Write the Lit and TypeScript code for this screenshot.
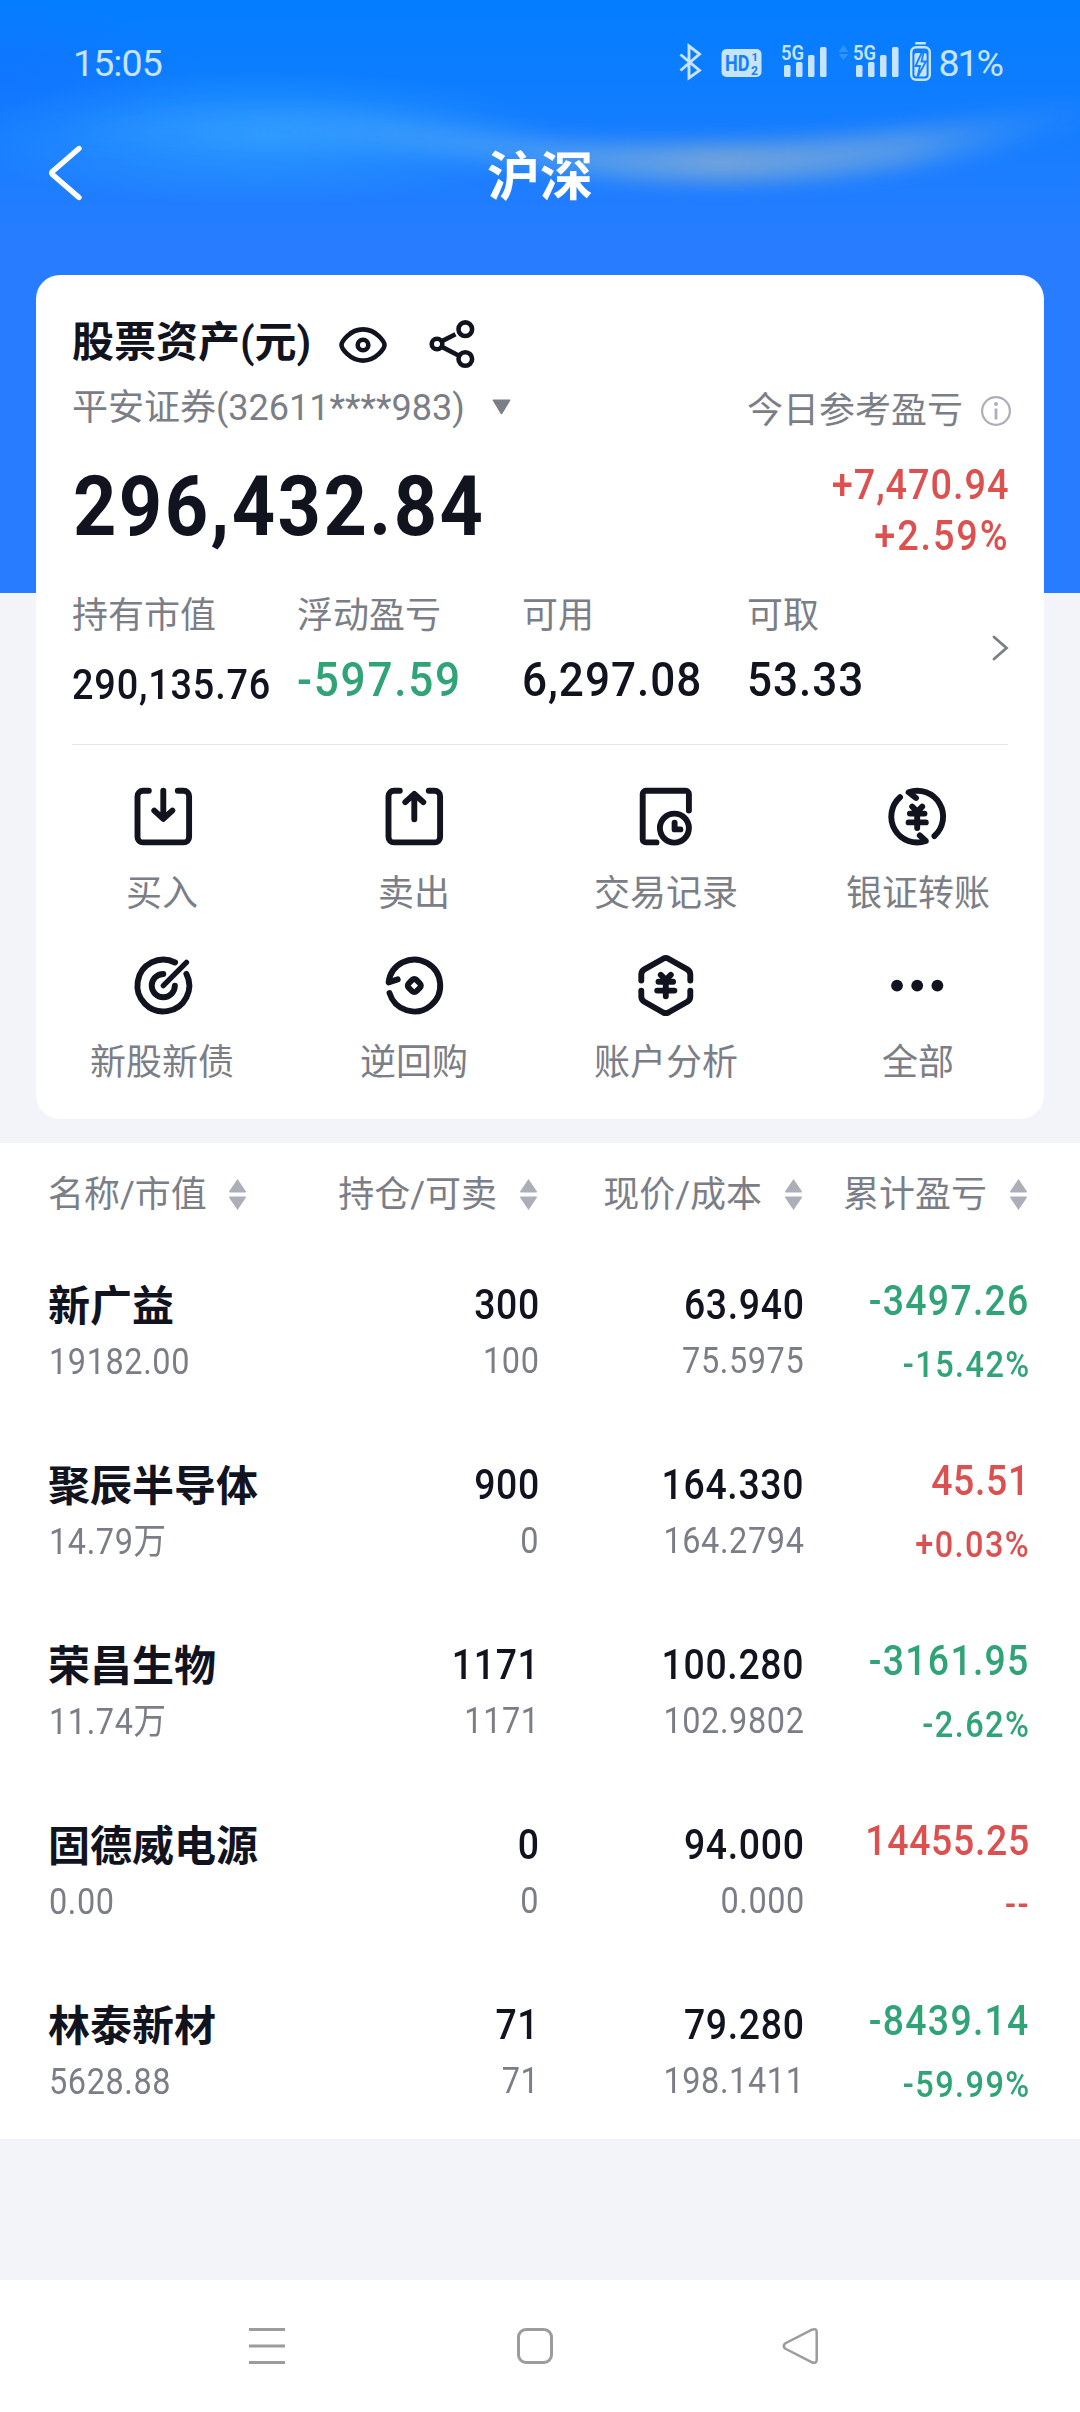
import { LitElement, html, svg, css } from "lit";
import { customElement } from "lit/decorators.js";

type Tone = "up" | "down";
interface Holding {
  name: string;
  value: string;
  qty: string;
  sellable: string;
  price: string;
  cost: string;
  profit: string;
  rate: string;
  tone: Tone;
}

const HOLDINGS: Holding[] = [
  { name: "新广益", value: "19182.00", qty: "300", sellable: "100", price: "63.940", cost: "75.5975", profit: "-3497.26", rate: "-15.42%", tone: "down" },
  { name: "聚辰半导体", value: "14.79万", qty: "900", sellable: "0", price: "164.330", cost: "164.2794", profit: "45.51", rate: "+0.03%", tone: "up" },
  { name: "荣昌生物", value: "11.74万", qty: "1171", sellable: "1171", price: "100.280", cost: "102.9802", profit: "-3161.95", rate: "-2.62%", tone: "down" },
  { name: "固德威电源", value: "0.00", qty: "0", sellable: "0", price: "94.000", cost: "0.000", profit: "14455.25", rate: "--", tone: "up" },
  { name: "林泰新材", value: "5628.88", qty: "71", sellable: "71", price: "79.280", cost: "198.1411", profit: "-8439.14", rate: "-59.99%", tone: "down" },
];

const yuan = (dy: number) => svg`
  <path transform="translate(0 ${dy})" d="M-5-10 0-5 5-10M0-5V11.5M-7.3-3H7.3M-8.6 5.8H8.6"/>`;

const ACTIONS = [
  { label: "买入", dx: 1.3, icon: svg`<path d="M-14.5-25.8H-20.3a5.5 5.5 0 0 0-5.5 5.5V20.3a5.5 5.5 0 0 0 5.5 5.5H20.3a5.5 5.5 0 0 0 5.5-5.5V-20.3a5.5 5.5 0 0 0-5.5-5.5H14.5M0-26V2M-9-6 0 2.3 9-6"/>` },
  { label: "卖出", dx: 0.3, icon: svg`<path d="M-14.5-25.8H-20.3a5.5 5.5 0 0 0-5.5 5.5V20.3a5.5 5.5 0 0 0 5.5 5.5H20.3a5.5 5.5 0 0 0 5.5-5.5V-20.3a5.5 5.5 0 0 0-5.5-5.5H14.5M0-22V2.6M-9-14.4 0-22.7 9-14.4"/>` },
  { label: "交易记录", dx: -0.2, icon: svg`<path d="M23.1-6V-22.6a3.2 3.2 0 0 0-3.2-3.2H-19.9a3.2 3.2 0 0 0-3.2 3.2V22.6a3.2 3.2 0 0 0 3.2 3.2H-9.3"/><circle cx="8.6" cy="11.5" r="14.5"/><path d="M8.8 6V12.8H14.6"/>` },
  { label: "银证转账", dx: -0.8, icon: svg`<path d="M-1.2-18.6-8.6-24.4A25.9 25.9 0 0 1 17.2 19.4M-17.2-19.4A25.9 25.9 0 0 0 8.6 24.4L2.6 18.8"/>${yuan(0)}` },
  { label: "新股新债", dx: 1.3, icon: svg`<path d="M11.8-23.1A25.9 25.9 0 1 0 23.1-11.8M0-11.6A11.6 11.6 0 1 0 11.6 0"/><path stroke-width="5.3" d="M0 0 23.2-23.2"/>` },
  { label: "逆回购", dx: 0.3, icon: svg`<path d="M-16.6-6.2-25.7-3.2A25.9 25.9 0 1 1-24.8 7.4"/><rect x="-5.5" y="-5.5" width="11" height="11" rx="3" transform="rotate(45)"/>` },
  { label: "账户分析", dx: -0.2, icon: svg`<path d="M-24.5-5V-11Q-24.5-14.4-21.5-16.2L-2.6-26.9Q0-28.2 2.6-26.9L21.5-16.2Q24.5-14.4 24.5-11V-5M-24.5 5V11Q-24.5 14.4-21.5 16.2L-2.6 26.9Q0 28.2 2.6 26.9L21.5 16.2Q24.5 14.4 24.5 11V5"/>${yuan(-0.8)}` },
  { label: "全部", dx: -0.8, icon: svg`<g fill="#11141f" stroke="none"><circle cx="-20.2" r="5.9"/><circle r="5.9"/><circle cx="20.2" r="5.9"/></g>` },
];

@customElement("status-bar")
class StatusBar extends LitElement {
  static styles = css`
    :host {
      display: flex;
      justify-content: space-between;
      height: 84px;
      padding: 35px 78px 0 73px;
      box-sizing: border-box;
      font-family: Roboto, sans-serif;
      color: #c6e3ff;
    }
    .time { font-size: 37.5px; line-height: 56px; letter-spacing: -0.9px; }
    .right { display: flex; align-items: flex-start; }
    .icons { display: block; margin: -5px 5px 0 0; }
    .battery { font-size: 37.5px; line-height: 56px; letter-spacing: -2px; }
  `;

  private signal(x: number) {
    return svg`
      <text x=${x - 3} y="30" font-size="20.5" font-weight="600" textLength="23" lengthAdjust="spacingAndGlyphs">5G</text>
      <g>
        <rect x=${x} y="35" width="6.5" height="12" rx="1.5"/>
        <rect x=${x + 12} y="32" width="6.5" height="15" rx="1.5"/>
        <rect x=${x + 24} y="25" width="6.5" height="22" rx="1.5"/>
        <rect x=${x + 36} y="17" width="6.5" height="30" rx="1.5"/>
      </g>`;
  }

  render() {
    return html`
      <span class="time">15:05</span>
      <div class="right">
        <svg class="icons" width="260" height="54" viewBox="0 0 260 54" fill="#c6e3ff" font-family="Roboto, sans-serif">
          <path d="M7.500 24.500 26.500 40.500 16 48V16L26.500 24 7.500 40.500" fill="none" stroke="#c6e3ff" stroke-width="2.9"/>
          <rect x="48.500" y="19" width="40" height="28" rx="5"/>
          <g fill="#1580ff" font-weight="700">
            <text x="52" y="41" font-size="22.500" textLength="24.500" lengthAdjust="spacingAndGlyphs">HD</text>
            <text x="78.500" y="31" font-size="11.500">1</text>
            <text x="78" y="45" font-size="12">2</text>
          </g>
          ${this.signal(111)}
          <g opacity=".22"><path d="M165.500 22 170.500 15 175.500 22ZM165.500 24 170.500 30 175.500 24Z"/></g>
          ${this.signal(183)}
          <rect x="242" y="12" width="11" height="2.600" rx="1"/>
          <rect x="238.200" y="17.200" width="18.600" height="32.600" rx="5" fill="none" stroke="#c6e3ff" stroke-width="2.400"/>
          <rect x="241.400" y="23" width="12.200" height="23.500" rx="2"/>
          <path d="M249.500 21 242.500 36H247L244.500 47 253 31.500H248.500L251 21Z" stroke="#1580ff" stroke-width="1.800"/>
        </svg>
        <span class="battery">81%</span>
      </div>`;
  }
}

@customElement("asset-card")
class AssetCard extends LitElement {
  static styles = css`
    :host {
      display: block;
      height: 844px;
      margin: 0 36px;
      box-sizing: border-box;
      background: #fff;
      border-radius: 24px;
      color: #11141f;
    }
    .top { display: flex; justify-content: space-between; height: 305px; padding: 0 33px 0 36px; }
    .left { padding-top: 38px; }
    .title { display: flex; align-items: center; height: 60px; line-height: 60px; font-size: 42px; font-weight: 600; white-space: nowrap; }
    .eye { margin: 3px 0 0 27px; }
    .share { margin: 1px 0 0 39px; }
    .broker { display: flex; align-items: center; height: 48px; margin-top: 11px; line-height: 48px; font-size: 36px; color: #7b7e87; white-space: nowrap; }
    .caret { margin: -2px 0 0 27px; }
    .total { margin-top: 27px; font-size: 84px; line-height: 96px; font-weight: 700; }
    .num { display: inline-block; white-space: nowrap; letter-spacing: 0.018em; transform: scaleX(0.9); transform-origin: left; }
    .total .num { letter-spacing: 0.033em; margin-left: 1px; }
    .right { display: flex; flex-direction: column; align-items: flex-end; padding-top: 112px; }
    .today { display: flex; align-items: center; height: 48px; line-height: 48px; font-size: 36px; color: #7b7e87; }
    .info { margin: -1px 0 0 18px; }
    .gain { margin: 24px 2px 0 0; text-align: right; font-size: 42px; line-height: 51px; font-weight: 500; color: #dd5050; }
    .gain .num { display: block; transform-origin: right; letter-spacing: 0.026em; }
    .gain .num + .num { letter-spacing: 0.05em; }
    .stats { display: grid; grid-template-columns: repeat(3, 225px) 1fr auto; height: 152px; padding-top: 12px; margin: 0 36px; border-bottom: 1px solid #e6e7eb; box-sizing: content-box; }
    .label { line-height: 48px; font-size: 36px; color: #7b7e87; white-space: nowrap; }
    .stat { margin-top: 10px; font-size: 49px; line-height: 60px; font-weight: 500; }
    .stat .num { letter-spacing: 0.022em; }
    .stat.small { margin-top: 15px; font-size: 42px; }
    .stat.down { color: #30a377; }
    .stat.down .num { letter-spacing: 0.04em; }
    .more { margin: 43px -1px 0 0; }
    .actions { display: grid; grid-template-columns: repeat(4, 252px); row-gap: 32px; padding-top: 36px; }
    .action { display: flex; flex-direction: column; align-items: center; gap: 17px; line-height: 48px; font-size: 36px; color: #7b7e87; }
    svg { display: block; flex: none; }
  `;

  render() {
    return html`
      <section class="top">
        <div class="left">
          <div class="title">
            <span>股票资产(元)</span>
            <svg class="eye" width="50" height="40" viewBox="0 0 50 40" fill="none" stroke="#11141f" stroke-width="4.6">
              <path d="M3.5 20C3.5 17 11.500 4.400 25 4.400S46.500 17 46.500 20 38.500 35.600 25 35.600 3.500 23 3.500 20Z"/>
              <circle cx="25" cy="20" r="5.300"/>
            </svg>
            <svg class="share" width="50" height="50" viewBox="0 0 50 50" fill="none" stroke="#11141f" stroke-width="4.600">
              <circle cx="10" cy="25" r="5.300"/><circle cx="38.300" cy="10.200" r="6.800"/><circle cx="38.300" cy="40" r="6.800"/>
              <path d="M14.500 22.400 28.500 15.200M14.500 27.600 32.500 37"/>
            </svg>
          </div>
          <div class="broker">
            <span>平安证券(32611****983)</span>
            <svg class="caret" width="19" height="16" viewBox="0 0 19 16" fill="#7b7e87"><path d="M1.200.5H17.800Q18.800.5 18.300 1.500L10.500 14.600Q9.500 16 8.500 14.600L.7 1.500Q.2.5 1.200.5Z"/></svg>
          </div>
          <div class="total"><span class="num">296,432.84</span></div>
        </div>
        <div class="right">
          <div class="today">
            <span>今日参考盈亏</span>
            <svg class="info" width="30" height="30" viewBox="0 0 30 30" fill="none" stroke="#acafba" stroke-width="2.200">
              <circle cx="15" cy="15" r="13.900"/>
              <path d="M15 12.500V23.500" stroke-width="2.800"/><circle cx="15" cy="8" r="2" fill="#acafba" stroke="none"/>
            </svg>
          </div>
          <div class="gain"><span class="num">+7,470.94</span><span class="num">+2.59%</span></div>
        </div>
      </section>
      <section class="stats">
        <div><div class="label">持有市值</div><div class="stat small"><span class="num">290,135.76</span></div></div>
        <div><div class="label">浮动盈亏</div><div class="stat down"><span class="num">-597.59</span></div></div>
        <div><div class="label">可用</div><div class="stat"><span class="num">6,297.08</span></div></div>
        <div><div class="label">可取</div><div class="stat"><span class="num">53.33</span></div></div>
        <svg class="more" width="17" height="26" viewBox="0 0 17 26" fill="none" stroke="#7b7e87" stroke-width="2.800"><path d="M2 2 14.500 13 2 24" stroke-linecap="round"/></svg>
      </section>
      <section class="actions">
        ${ACTIONS.map(
          (a) => html`<div class="action">
            <svg width="72" height="72" viewBox="-36 -36 72 72" fill="none" stroke="#11141f" stroke-width="5.900" stroke-linecap="round" stroke-linejoin="round">
              <g transform="translate(${a.dx} -.4)">${a.icon}</g>
            </svg>
            <span>${a.label}</span>
          </div>`
        )}
      </section>`;
  }
}

@customElement("holdings-table")
class HoldingsTable extends LitElement {
  static styles = css`
    :host { display: block; height: 996px; margin-top: 24px; background: #fff; color: #11141f; }
    .head, .row { display: grid; grid-template-columns: 276px 214px 265px 1fr; padding: 0 52px 0 48px; }
    .head { height: 96px; padding-top: 28px; box-sizing: border-box; align-content: start; font-size: 36px; line-height: 48px; color: #7b7e87; }
    .th { display: flex; align-items: center; justify-content: flex-end; gap: 22.500px; height: 48px; padding-right: 1.500px; white-space: nowrap; }
    .th svg { margin-top: -1px; }
    .th:first-child { justify-content: flex-start; }
    .row { height: 180px; }
    .cell { display: flex; flex-direction: column; align-items: flex-end; white-space: nowrap; }
    .cell.first { align-items: flex-start; padding-top: 41px; gap: 4px; }
    .cell.mid { padding-top: 39px; gap: 5px; }
    .cell.last { padding-top: 35px; gap: 13px; }
    .name { font-size: 42px; line-height: 54px; font-weight: 600; }
    .num { display: block; letter-spacing: 0.018em; margin-right: -1.500px; transform: scaleX(0.89); transform-origin: right; }
    .main { font-size: 42px; line-height: 54px; font-weight: 500; }
    .sub { font-size: 36.500px; line-height: 48px; color: #7b7e87; }
    .first .sub { transform-origin: left; margin-left: 1px; }
    .up .num { color: #dd5050; }
    .down .num { color: #30a377; }
    .down .main { letter-spacing: 0.034em; margin-right: -2px; }
    .last .sub { font-weight: 500; letter-spacing: 0.044em; margin-right: -2.500px; }
    svg { display: block; flex: none; }
  `;

  render() {
    return html`
      <div class="head">
        ${["名称/市值", "持仓/可卖", "现价/成本", "累计盈亏"].map(
          (t) => html`<div class="th"><span>${t}</span>
            <svg width="17" height="31" viewBox="0 0 17 31" fill="#acafba"><path d="M8.500 0 17 12.500Q17 13.500 16 13.500H1Q0 13.500 0 12.500ZM8.500 31 17 18.500Q17 17.500 16 17.500H1Q0 17.500 0 18.500Z"/></svg>
          </div>`
        )}
      </div>
      ${HOLDINGS.map(
        (h) => html`<div class="row">
          <div class="cell first"><span class="name">${h.name}</span><span class="num sub">${h.value}</span></div>
          <div class="cell mid"><span class="num main">${h.qty}</span><span class="num sub">${h.sellable}</span></div>
          <div class="cell mid"><span class="num main">${h.price}</span><span class="num sub">${h.cost}</span></div>
          <div class="cell last ${h.tone}"><span class="num main">${h.profit}</span><span class="num sub">${h.rate}</span></div>
        </div>`
      )}`;
  }
}

@customElement("app-root")
class AppRoot extends LitElement {
  static styles = css`
    :host {
      display: flex;
      flex-direction: column;
      position: relative;
      width: 1080px;
      height: 2412px;
      overflow: hidden;
      background: #f3f4f9;
      font-family: Roboto, "Noto Sans CJK SC", sans-serif;
    }
    .backdrop { position: absolute; left: 0; top: 0; display: block; }
    status-bar, .bar, asset-card { position: relative; }
    .bar { display: grid; grid-template-columns: 120px 1fr 120px; align-items: start; height: 191px; color: #fff; }
    .back { display: block; margin: 60px 0 0 46px; }
    .heading { margin: 0; padding-top: 59px; text-align: center; font-size: 53px; line-height: 70px; font-weight: 700; }
    .nav { margin-top: auto; height: 132px; background: #fff; }
    .nav svg { display: block; }
  `;

  render() {
    return html`
      <svg class="backdrop" width="1080" height="593" viewBox="0 0 1080 593">
        <defs>
          <linearGradient id="sky" x1="0" y1="0" x2="0" y2="1">
            <stop offset="0" stop-color="#047dff"/>
            <stop offset=".15" stop-color="#0e7dff"/>
            <stop offset=".34" stop-color="#217dff"/>
            <stop offset=".42" stop-color="#287cff"/>
            <stop offset="1" stop-color="#287cff"/>
          </linearGradient>
          <linearGradient id="wave" x1="0" y1="0" x2="1" y2="0">
            <stop offset="0" stop-color="#3aa4ff" stop-opacity="0"/>
            <stop offset=".2" stop-color="#3aa4ff" stop-opacity=".35"/>
            <stop offset=".42" stop-color="#4fa2f6" stop-opacity=".65"/>
            <stop offset=".64" stop-color="#7aa7d8" stop-opacity=".9"/>
            <stop offset=".82" stop-color="#5f9fe6" stop-opacity=".8"/>
            <stop offset="1" stop-color="#2a8cff" stop-opacity=".15"/>
          </linearGradient>
          <radialGradient id="glow"><stop offset="0" stop-color="#2f9cff" stop-opacity=".85"/><stop offset="1" stop-color="#2f9cff" stop-opacity="0"/></radialGradient>
          <radialGradient id="edge"><stop offset="0" stop-color="#1768ff" stop-opacity=".35"/><stop offset="1" stop-color="#1768ff" stop-opacity="0"/></radialGradient>
          <filter id="soft" x="-10%" y="-60%" width="120%" height="220%"><feGaussianBlur stdDeviation="10"/></filter>
        </defs>
        <rect width="1080" height="593" fill="url(#sky)"/>
        <ellipse cx="0" cy="75" rx="200" ry="75" fill="url(#edge)"/>
        <ellipse cx="260" cy="138" rx="300" ry="68" fill="url(#glow)"/>
        <path d="M60 124C200 104 340 108 450 126S620 145 720 144 960 126 1090 96V122C980 158 860 181 720 181S560 168 450 156 200 132 60 148Z" fill="url(#wave)" filter="url(#soft)"/>
      </svg>
      <status-bar></status-bar>
      <header class="bar">
        <svg class="back" width="38" height="58" viewBox="0 0 38 58" fill="none" stroke="#fff" stroke-width="5.400" stroke-linecap="round" stroke-linejoin="round"><path d="M33 4.500 6.500 27.500Q5 29 6.500 30.500L33 53.500"/></svg>
        <h1 class="heading">沪深</h1>
      </header>
      <asset-card></asset-card>
      <holdings-table></holdings-table>
      <nav class="nav">
        <svg width="1080" height="132" viewBox="0 0 1080 132" fill="none" stroke="#9c9c9c" stroke-width="3" stroke-linejoin="round">
          <path d="M249 49.500H285M249 66H285M249 82.500H285"/>
          <rect x="518.500" y="49.500" width="33" height="33" rx="7.500"/>
          <path stroke-width="2.500" d="M785 63.500 812 49.700Q816.700 48 816.700 52V80Q816.700 84 812 82.300L785 68.500Q782.500 66 785 63.500Z"/>
        </svg>
      </nav>`;
  }
}
